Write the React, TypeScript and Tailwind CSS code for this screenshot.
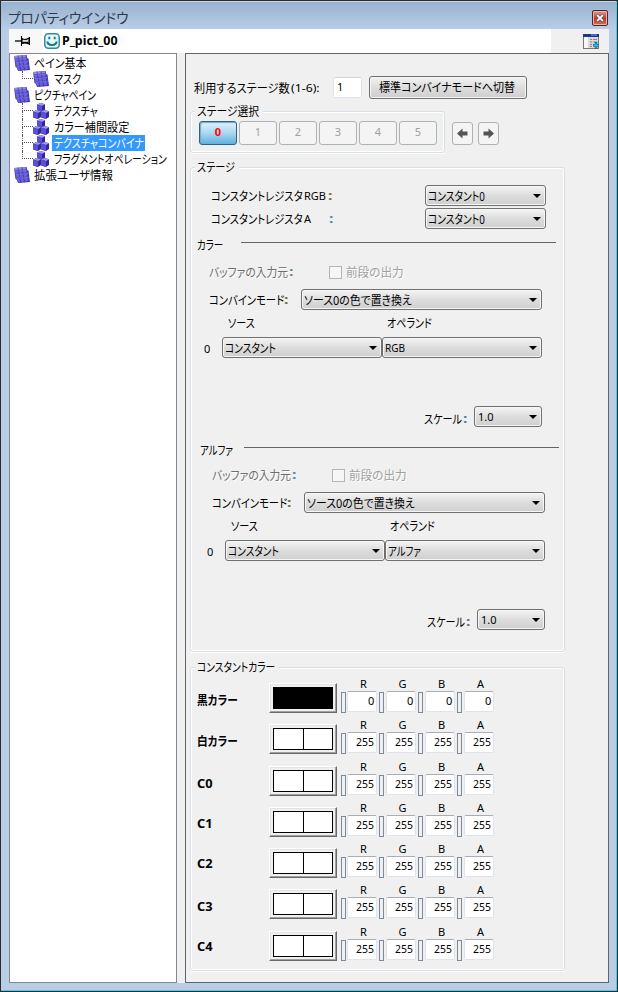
import { useLayoutEffect, useRef, useState, type ReactNode } from "react";
import clsx from "clsx";

/** Single-line text condensed or stretched to the width of its own box. */
function T({ className, children }: { className: string; children: ReactNode }) {
  const box = useRef<HTMLSpanElement>(null);
  const ink = useRef<HTMLSpanElement>(null);
  const [k, setK] = useState(1);
  useLayoutEffect(() => {
    if (box.current && ink.current && ink.current.offsetWidth > 0) {
      setK(box.current.clientWidth / ink.current.offsetWidth);
    }
  }, []);
  const japanese = typeof children === "string" && /[^\x00-\x7f]/.test(children);
  return (
    <span
      ref={box}
      className={clsx("flex h-4 shrink-0 items-center overflow-visible leading-4", japanese && "pt-0.5", className)}
    >
      <span
        ref={ink}
        className="shrink-0 origin-left whitespace-nowrap [font-feature-settings:'palt']"
        style={{ transform: `scaleX(${k})` }}
      >
        {children}
      </span>
    </span>
  );
}

function GridIcon() {
  return (
    <svg width="16" height="16" viewBox="0 0 16 16" className="shrink-0">
      <path d="M0 1 L12.5 0 L13 3 L14.5 3.6 L16 15 L4 16 L3 13 L1.5 12 Z" fill="#453ab8" />
      <path d="M0 1 L12.5 0 L13 2.2 L.6 3.2 Z" fill="#8f8aec" />
      <path d="M1 4.6 L13 3.6 L13.3 5.8 L1.4 6.8 Z M1.7 8 L13.7 7 L14.1 9.4 L2.2 10.4 Z M2.9 11.8 L14.5 10.8 L15 14 L3.8 15 Z" fill="#6a60dc" />
      <path d="M4 .8 L6.8 15.6 M8 .5 L10.6 15.4 M12 .2 L14.6 15" stroke="#372b9e" strokeWidth=".7" fill="none" />
      <path d="M.8 4.2 L13.4 3.2 M1.6 7.6 L14 6.6 M2.4 11.3 L14.6 10.3" stroke="#9c97f0" strokeWidth=".6" fill="none" />
    </svg>
  );
}

function Cube({ x, y }: { x: number; y: number }) {
  return (
    <g transform={`translate(${x} ${y})`}>
      <path d="M0 1.6 L3.5 0 L8 1.2 L8 7 L5 9 L0 7.6 Z" fill="#33279a" />
      <path d="M0 1.6 L3.5 0 L8 1.2 L5 3 Z" fill="#9d97f2" />
      <path d="M0 1.6 L5 3 L5 9 L0 7.6 Z" fill="#5b50d4" />
    </g>
  );
}

function CubesIcon() {
  return (
    <svg width="16" height="16" viewBox="0 0 16 16" className="shrink-0">
      <Cube x={4} y={0} />
      <Cube x={0} y={7} />
      <Cube x={8} y={7} />
    </svg>
  );
}

function TreeItem({ kind, width, label, selected, last }: {
  kind: "root" | "cubes" | "grid"; width: string; label: string; selected?: boolean; last?: boolean;
}) {
  if (kind === "root") {
    return (
      <div className="flex h-4 items-center pl-1">
        <GridIcon />
        <T className={clsx("ml-1", width)}>{label}</T>
      </div>
    );
  }
  return (
    <div className="flex h-4 items-center pl-3">
      <div className="h-4 w-[11px] shrink-0">
        <div className="h-2 border-b border-l border-dotted border-[#555]" />
        {!last && <div className="h-2 border-l border-dotted border-[#555]" />}
      </div>
      {kind === "grid" ? <GridIcon /> : <CubesIcon />}
      <div className={clsx("ml-[3px] pr-px pl-0.5", selected && "bg-[#3399ff] text-white")}>
        <T className={width}>{label}</T>
      </div>
    </div>
  );
}

function Select({ className, textWidth, label }: { className: string; textWidth: string; label: ReactNode }) {
  return (
    <div
      className={clsx(
        "flex h-[21px] shrink-0 items-center justify-between rounded-[3px] border border-[#707070] bg-linear-to-b from-[#f4f4f4] from-0% via-[#dddddd] via-50% to-[#cfcfcf] pr-1 pl-0.5 shadow-[inset_0_0_0_1px_#f6f6f6]",
        className,
      )}
    >
      <T className={textWidth}>{label}</T>
      <svg width="8" height="4" viewBox="0 0 8 4"><path d="M0 0H8L4 4Z" fill="#000" /></svg>
    </div>
  );
}

function Group({ className, titleWidth, title, children }: {
  className: string; titleWidth: string; title: string; children: ReactNode;
}) {
  return (
    <div className={clsx("ml-1 shrink-0 rounded-[3px] border border-[#d5dfe5] shadow-[inset_0_0_0_1px_#fff,0_1px_0_#fff]", className)}>
      <div className="-mt-[9px] ml-1 w-fit bg-[#f0f0f0] pr-1 pl-0.5">
        <T className={titleWidth}>{title}</T>
      </div>
      {children}
    </div>
  );
}

function StageButton({ n }: { n: number }) {
  if (n === 0) {
    return (
      <div className="flex h-6 w-[38px] items-center justify-center rounded-[3px] border border-[#2c628b] bg-linear-to-b from-[#e0f2fb] via-[#a9d8f0] via-50% to-[#5fb0dc] pb-0.5 text-[11px] font-bold text-[#f00] shadow-[inset_1px_1px_1px_#7ba7c0]">
        0
      </div>
    );
  }
  return (
    <div className="flex h-6 w-[38px] items-center justify-center rounded-[3px] border border-[#adb2b5] bg-[#f4f4f4] pb-0.5 text-[11px] text-[#a0a0a0]">
      {n}
    </div>
  );
}

function ArrowButton({ flip }: { flip?: boolean }) {
  return (
    <div className="flex h-[23px] w-[21px] items-center justify-center rounded-[3px] border border-[#adb2b5] bg-[#f4f4f4]">
      <svg width="11" height="11" viewBox="0 0 11 11" className={clsx(flip && "-scale-x-100")}>
        <path d="M0 5.5 L5.5 .5 V3.5 H10.5 V7.5 H5.5 V10.5 Z" fill="#555" />
      </svg>
    </div>
  );
}

function CombineSection({ head, operand, alpha }: { head: ReactNode; operand: ReactNode; alpha?: boolean }) {
  return (
    <div className={clsx(alpha ? "mt-[15px] ml-[3px]" : "mt-2")}>
      <div className="flex h-4 items-start pl-1.5">
        {head}
        <div className="mt-[5px] h-px w-[315px] bg-[#646464]" />
      </div>
      <div className={clsx("flex h-4 items-center pl-[18px]", alpha ? "mt-[9px]" : "mt-[11px]")}>
        <T className="w-[79px] text-[#6d6d6d] [text-shadow:1px_1px_#fff]">バッファの入力元</T>
        <T className="ml-px w-[4px] font-bold text-[#5d86a0]">:</T>
        <div className="ml-9 size-[13px] border border-[#b5b5b5] bg-[#f6f6f6]" />
        <T className="ml-1 w-[58px] text-[#a0a0a0] [text-shadow:1px_1px_#fff]">前段の出力</T>
      </div>
      <div className="mt-[9px] flex h-[21px] items-center pl-[18px]">
        <T className="w-[75px]">コンバインモード</T>
        <T className="w-[4px] font-bold text-[#7a6a3a]">:</T>
        <Select className="ml-[13px] w-[241px]" textWidth="w-[108px]" label="ソース0の色で置き換え" />
      </div>
      <div className="mt-[5px] flex h-4 pl-[37px]">
        <T className="w-[27px]">ソース</T>
        <T className="ml-[132px] w-[45px]">オペランド</T>
      </div>
      <div className="mt-1.5 flex h-[21px] items-center pl-[13px]">
        <T className="mt-0.5 w-[6px] text-[11px]">0</T>
        <Select className="ml-3 w-[160px]" textWidth="w-[51px]" label="コンスタント" />
        <Select className="w-[160px]" textWidth={alpha ? "w-[33px]" : "w-[20px] text-[11px]"} label={operand} />
      </div>
      <div className="mt-12 flex h-[21px] items-center pl-[233px]">
        <T className="mt-1 w-[38px]">スケール</T>
        <T className="mt-1 ml-px w-[4px] font-bold text-[#5d7486]">:</T>
        <Select className="ml-[7px] w-[68px]" textWidth="ml-px w-[16px] text-[11px]" label="1.0" />
      </div>
    </div>
  );
}

const colorRows = [
  { name: "黒カラー", width: "w-[41px]", value: 0, row: "mt-[2px]", label: "mt-[15px]" },
  { name: "白カラー", width: "w-[41px]", value: 255, row: "mt-[5px]", label: "mt-[15px]" },
  { name: "C0", width: "w-[16px]", value: 255, row: "mt-[6px]", label: "mt-[16px]" },
  { name: "C1", width: "w-[16px]", value: 255, row: "mt-[5px]", label: "mt-[15px]" },
  { name: "C2", width: "w-[16px]", value: 255, row: "mt-[5px]", label: "mt-[14px]" },
  { name: "C3", width: "w-[16px]", value: 255, row: "mt-[5px]", label: "mt-[16px]" },
  { name: "C4", width: "w-[16px]", value: 255, row: "mt-[6px]", label: "mt-[14px]" },
];

function Channel({ name, value, first }: { name: string; value: number; first: boolean }) {
  return (
    <div className={clsx("flex shrink-0", !first && "ml-[2px]")}>
      <div className={clsx("mt-[15px] h-[21px] w-[5px] border border-[#7a8a9c]", first ? "mr-px" : "mr-[2px]")} />
      <div>
        <div className="flex h-[14px] items-center justify-center pl-[3px] text-[11px]">{name}</div>
        <div className="flex h-[21px] w-[30px] items-center justify-end rounded-[2px] border border-[#e2e3ea] border-t-[#abadb3] bg-white pr-0.5 pb-0.5">
          <T className={clsx("text-[11px]", value === 0 ? "w-[6px]" : "w-[18px]")}>{value}</T>
        </div>
      </div>
    </div>
  );
}

export default function App() {
  return (
    <div className="flex h-[992px] w-[618px] flex-col overflow-hidden border border-[#2e2b2d] bg-[#b9cde6] font-['Noto_Sans','Noto_Sans_CJK_JP',sans-serif] text-[12px] leading-4 text-black">
      <div className="flex min-h-0 grow flex-col border-r border-b border-[#3fd0ee]">
        {/* Title bar */}
        <div className="flex h-7 shrink-0 items-start justify-between border-t border-[#c6d4e4] bg-linear-to-b from-[#98b2d0] to-[#b9cde6] pr-2 pl-[7px]">
          <T className="mt-[7px] w-[120px] text-[14px] text-[#2c3a4a]">プロパティウインドウ</T>
          <div className="mt-2 flex size-4 items-center justify-center rounded-[2px] border border-[#5c2025] bg-linear-to-b from-[#dc9a90] via-[#b53a28] via-55% to-[#d07058] shadow-[inset_0_0_0_1px_#e7b3ab]">
            <svg width="8" height="8" viewBox="0 0 8 8">
              <path d="M1.2 1.2 6.8 6.8 M6.8 1.2 1.2 6.8" stroke="#555" strokeWidth="3.2" />
              <path d="M1.2 1.2 6.8 6.8 M6.8 1.2 1.2 6.8" stroke="#fff" strokeWidth="1.9" />
            </svg>
          </div>
        </div>

        {/* Toolbar */}
        <div className="mr-[7px] ml-2 flex h-6 shrink-0 items-center bg-white">
          <div className="flex h-full w-[33px] items-center bg-[#f8f8f8] pl-[6px]">
            <svg width="16" height="12" viewBox="0 0 16 12">
              <path d="M0 6H6" stroke="#000" strokeWidth="1.3" />
              <path d="M6.5 1V11 M7 3.5C9 5 11 5 14 3V9C11 7.5 9 7.5 7 8.5Z" stroke="#000" strokeWidth="1.1" fill="#ddd" />
              <path d="M8 7.5H13.5" stroke="#000" strokeWidth="1.3" />
              <path d="M14.5 2V10" stroke="#000" strokeWidth="1" />
            </svg>
          </div>
          <svg width="16" height="16" viewBox="0 0 16 16" className="ml-[2px]">
            <rect x=".75" y=".75" width="14.5" height="14.5" rx="3.5" fill="#e6f8fa" stroke="#2b8c9c" strokeWidth="1.5" />
            <path d="M5.3 3.8V6.2 M10.7 3.8V6.2" stroke="#17798b" strokeWidth="1.9" />
            <path d="M3.3 8.5C4.2 13.2 11.8 13.2 12.7 8.5" stroke="#17798b" strokeWidth="2" fill="none" />
          </svg>
          <T className="ml-[2px] w-[56px] text-[12px] font-bold">P_pict_00</T>
          <div className="ml-auto flex h-full w-[58px] items-center bg-[#f0f0f0] pl-8">
            <svg width="16" height="15" viewBox="0 0 16 15">
              <rect x=".5" y=".5" width="15" height="14" fill="#d9d9d9" stroke="#777" />
              <rect x="0" y="0" width="16" height="3" fill="#173a86" />
              <rect x="8" y="0" width="6" height="2" fill="#5c62d0" />
              <rect x="1" y="3" width="4" height="11" fill="#f6f6f6" />
              <path d="M7 5.5H9 M10 5.5H14 M7 8H9 M10 8H14 M7 10.5H9 M7 12.5H9" stroke="#888" />
              <path d="M13 8V14.4 M10 11.4H16" stroke="#084b8a" strokeWidth="2.4" />
              <path d="M13 8.8V14 M10.5 11.4H15.6" stroke="#22c7e8" strokeWidth="1.2" />
            </svg>
          </div>
        </div>

        <div className="mr-[7px] mb-[7px] ml-2 flex min-h-0 grow bg-[#f0f0f0]">
          {/* Property tree */}
          <div className="w-[168px] shrink-0 border border-[#828790] bg-white pt-px">
            <TreeItem kind="root" width="w-[52px]" label="ペイン基本" />
            <TreeItem kind="grid" width="w-[27px]" label="マスク" last />
            <TreeItem kind="root" width="w-[62px]" label="ピクチャペイン" />
            <TreeItem kind="cubes" width="w-[44px]" label="テクスチャ" />
            <TreeItem kind="cubes" width="w-[75px]" label="カラー補間設定" />
            <TreeItem kind="cubes" width="w-[90px]" label="テクスチャコンバイナ" selected />
            <TreeItem kind="cubes" width="w-[113px]" label="フラグメントオペレーション" last />
            <TreeItem kind="root" width="w-[79px]" label="拡張ユーザ情報" />
          </div>

          {/* Combiner settings */}
          <div className="ml-2 flex min-w-0 grow flex-col border border-[#646464]">
            <div className="mt-[22px] flex h-[23px] shrink-0 items-center pl-2">
              <T className="w-[96px]">利用するステージ数</T>
              <T className="ml-px w-[29px] text-[11px]">(1-6):</T>
              <div className="ml-[13px] flex h-[21px] w-[29px] items-center rounded-[2px] border border-[#e2e3ea] border-t-[#d4d5da] bg-white pb-0.5 pl-[3px] text-[11px]">
                1
              </div>
              <div className="ml-[7px] flex h-[23px] w-[158px] items-center justify-center rounded-[3px] border border-[#707070] bg-linear-to-b from-[#f2f2f2] via-[#dddddd] via-50% to-[#cfcfcf] pr-0.5 pb-px shadow-[inset_0_0_0_1px_#f6f6f6]">
                <T className="w-[136px]">標準コンバイナモードへ切替</T>
              </div>
            </div>

            <div className="mt-3 flex h-[42px] shrink-0">
              <Group className="w-[255px]" titleWidth="w-[62px]" title="ステージ選択">
                <div className="mt-0.5 flex gap-0.5 pl-2">
                  {[0, 1, 2, 3, 4, 5].map((n) => (
                    <StageButton key={n} n={n} />
                  ))}
                </div>
              </Group>
              <div className="mt-[11px] ml-[7px] flex gap-[5px]">
                <ArrowButton />
                <ArrowButton flip />
              </div>
            </div>

            <Group className="mt-[14px] h-[485px] w-[375px]" titleWidth="w-[38px]" title="ステージ">
              <div className="mt-[10px] flex h-[21px] items-center pl-5">
                <T className="w-[92px]">コンスタントレジスタ</T>
                <T className="ml-px w-[22px] text-[11px]">RGB</T>
                <T className="ml-[2px] w-[4px] font-bold text-[#7a6a3a]">:</T>
                <Select className="ml-[93px] w-[121px]" textWidth="w-[57px]" label="コンスタント0" />
              </div>
              <div className="mt-[2px] flex h-[21px] items-center pl-5">
                <T className="w-[92px]">コンスタントレジスタ</T>
                <T className="ml-px w-[7px] text-[11px]">A</T>
                <T className="ml-[18px] w-[4px] font-bold text-[#5d86a0]">:</T>
                <Select className="ml-[92px] w-[121px]" textWidth="w-[57px]" label="コンスタント0" />
              </div>
              <CombineSection head={<T className="mr-[18px] w-[26px]">カラー</T>} operand="RGB" />
              <CombineSection alpha head={<T className="mr-[11px] w-[33px]">アルファ</T>} operand="アルファ" />
            </Group>

            <Group className="mt-[15px] h-[304px] w-[375px]" titleWidth="w-[78px]" title="コンスタントカラー">
              {colorRows.map((r) => (
                <div key={r.name} className={clsx("flex h-9 items-start pl-1.5", r.row)}>
                  <div className={clsx("w-[72px]", r.label)}>
                    <T className={clsx("font-bold", r.width)}>{r.name}</T>
                  </div>
                  <div className="mt-[6px] h-[30px] w-[68px] border border-t-white border-r-[#696969] border-b-[#696969] border-l-white bg-[#f0f0f0] p-px shadow-[inset_-1px_-1px_0_#a0a0a0,inset_1px_1px_0_#e3e3e3]">
                    <div className="m-[2px] flex h-[22px] w-[60px] border border-black bg-white">
                      <div className={clsx("h-full w-[30px] border-r border-black", swatchFill(r.value))} />
                      <div className={clsx("h-full grow", swatchFill(r.value))} />
                    </div>
                  </div>
                  <div className="ml-1 flex">
                    {["R", "G", "B", "A"].map((c) => (
                      <Channel key={c} name={c} value={r.value} first={c === "R"} />
                    ))}
                  </div>
                </div>
              ))}
            </Group>
          </div>
        </div>
      </div>
    </div>
  );
}

function swatchFill(v: number) {
  return v === 0 ? "bg-black" : "bg-white";
}
